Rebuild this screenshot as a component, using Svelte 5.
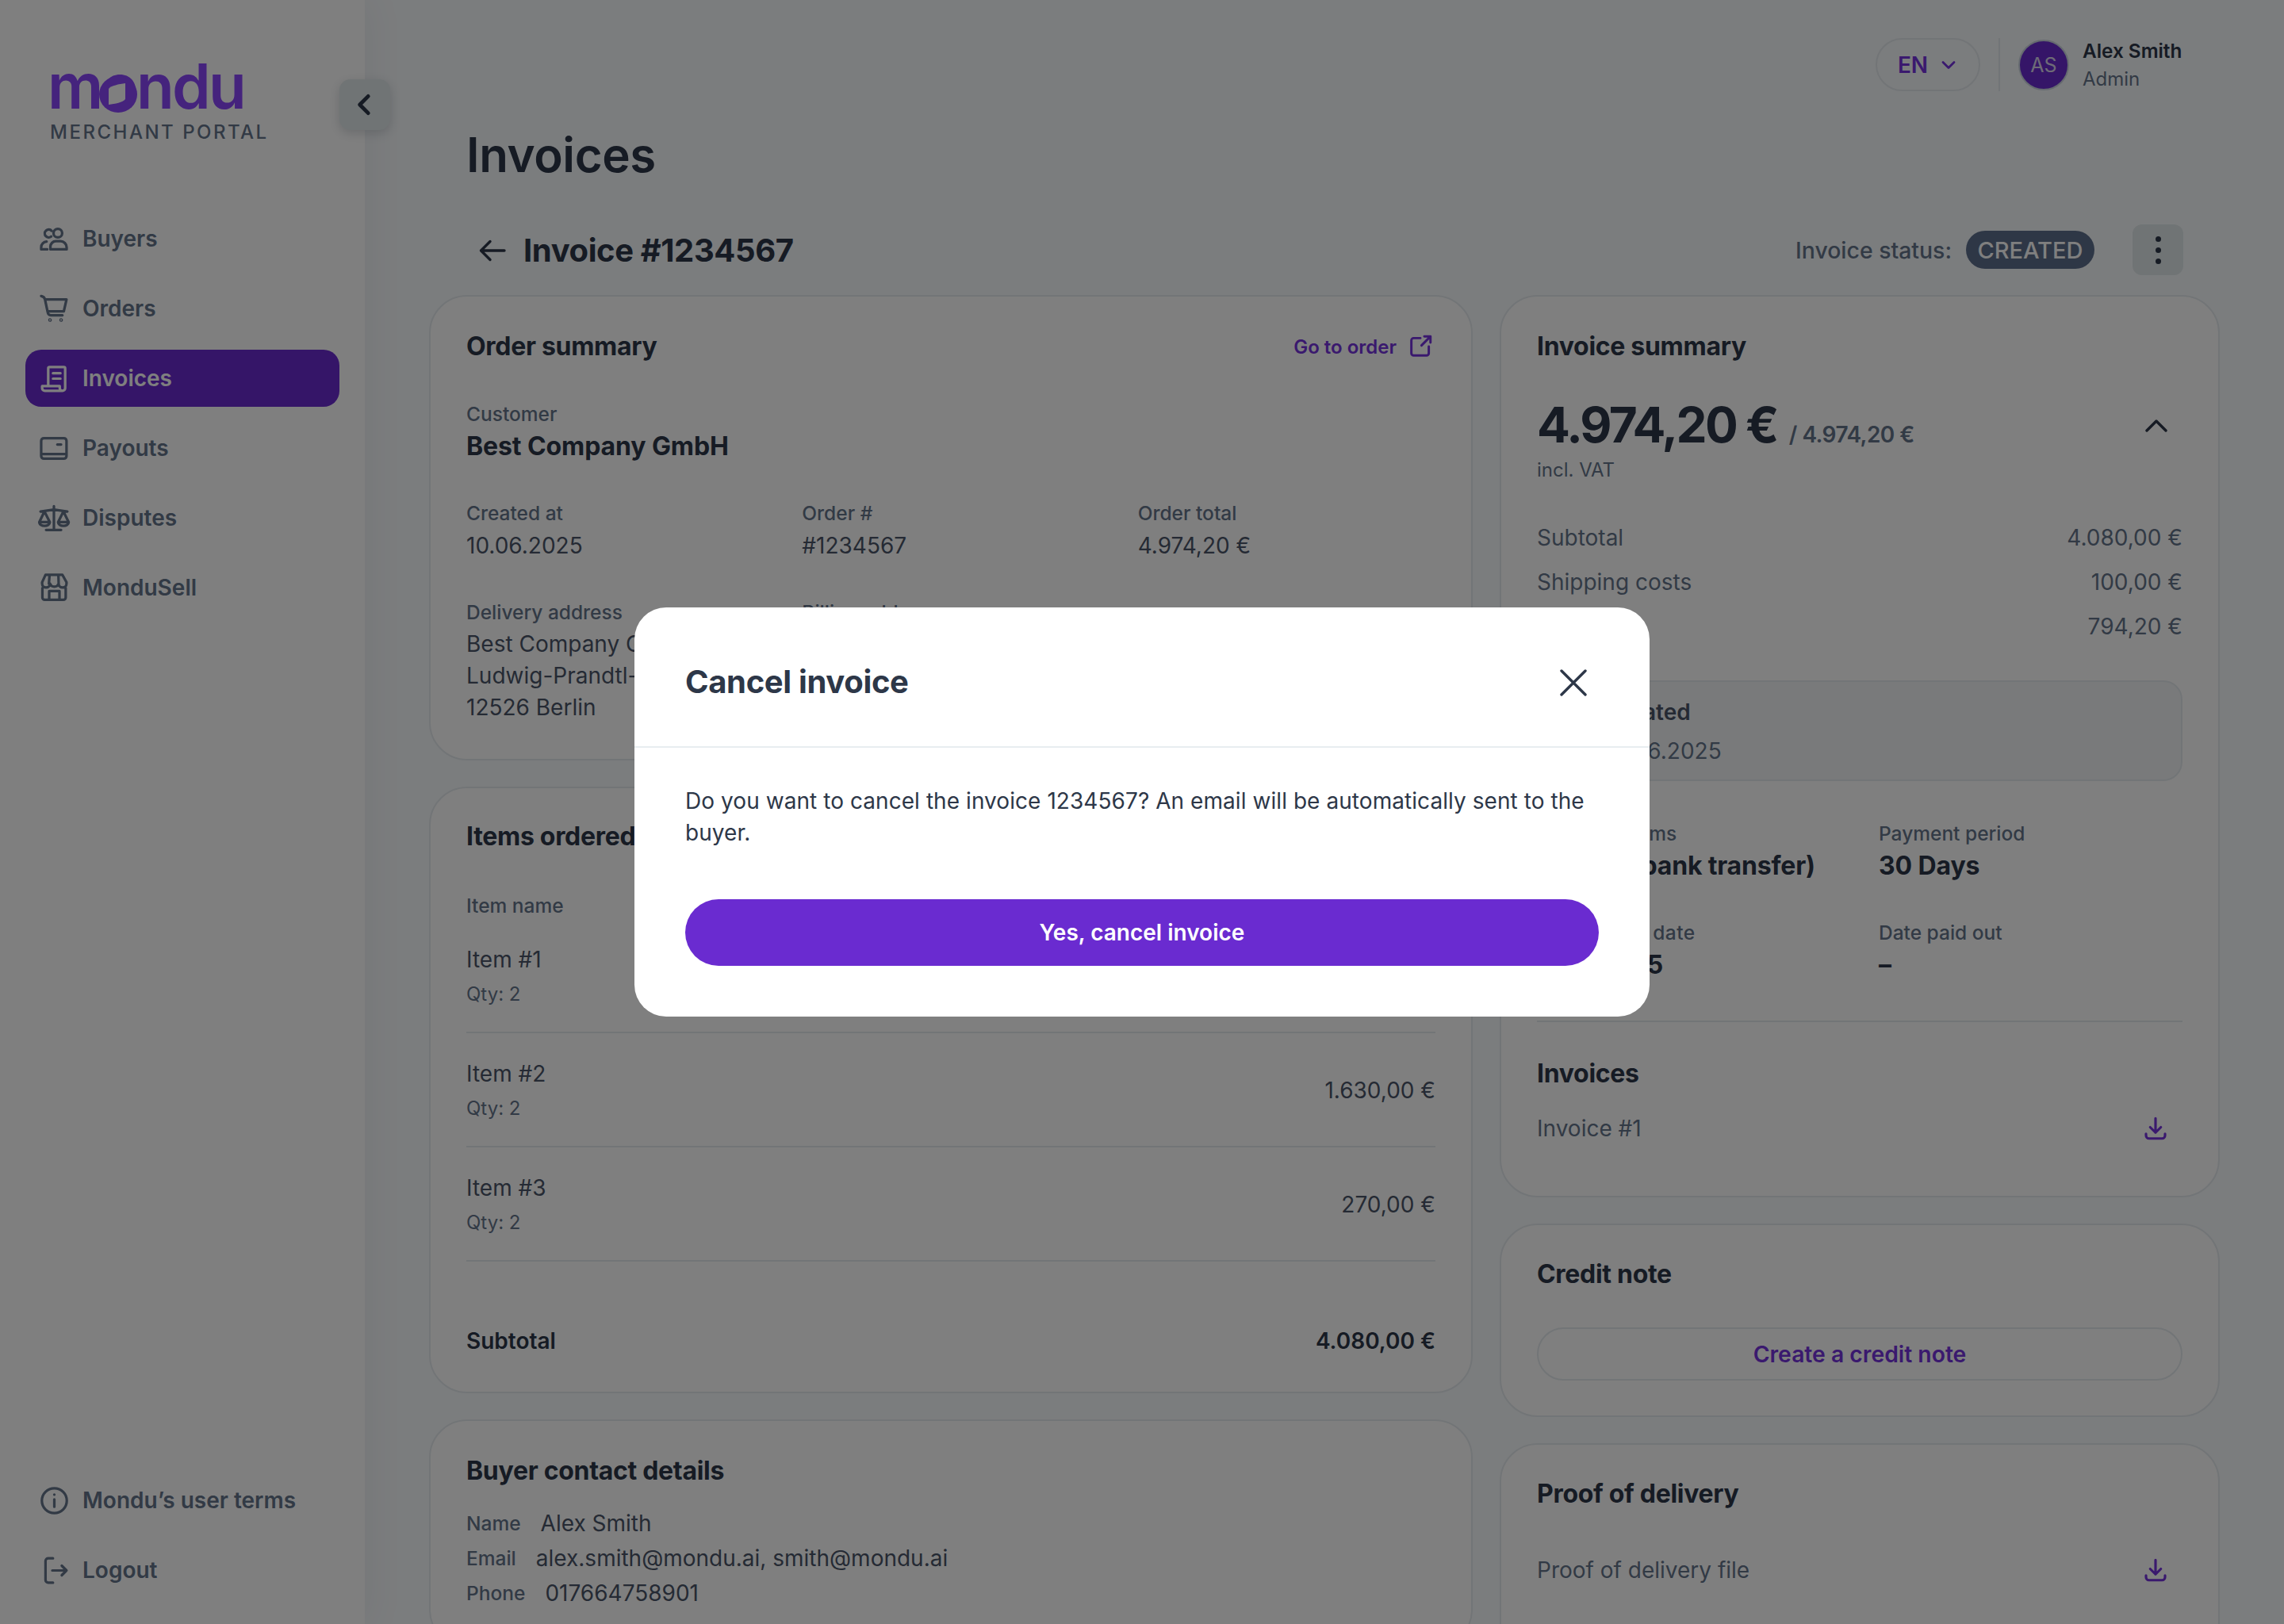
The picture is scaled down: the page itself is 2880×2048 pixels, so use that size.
<script>
  const icons = {
    buyers: "M14.6 4.400a3.200 3.200 0 1 1 0 6.400 3.200 3.200 0 0 1 0-6.400z M9.100 19.600v-2a4 4 0 0 1 4-4h3.500a4.500 4.500 0 0 1 4.500 4.500v1.500z M10 5.900a2.900 2.900 0 1 0-.3 4.200 M2.300 19.600v-1.500a4.300 4.300 0 0 1 4-4.300 M2.300 19.600h4.500",
    cart: "M2.300 2.600c1.500.3 2.500 1 2.800 2.400L7 14c.3 1.800 1 2.700 2.500 2.700H18 M5.300 5H21l-2 8.800H7 M8.800 19.800a.4.4 0 1 1 0 .8.4.4 0 0 1 0-.8z M17 19.800a.4.4 0 1 1 0 .8.4.4 0 0 1 0-.8z",
    receipt: "M7.500 17.500V4.500a1 1 0 0 1 1-1h10.500a1 1 0 0 1 1 1v14.500a2 2 0 0 1-2 2H5a2 2 0 0 1-2-2v-1.500h13v1.500a2 2 0 0 0 2 2 M11 8h5.500M11 12h5.500",
    wallet: "M4.300 4.400h14.700a2 2 0 0 1 2 2v11.200a2 2 0 0 1-2 2H4.300a2 2 0 0 1-2-2V6.400a2 2 0 0 1 2-2z M2.300 16.100H21 M14.200 9.100h2.800",
    scale: "M11.700 3.200v17.500 M5.900 20.700h11.100 M1.800 7.100 11.700 5.600 21.600 7.100 M4.700 7 .9 14.900h7.800z M.9 14.900a3.900 2.800 0 0 0 7.800 0 M18.700 7l-3.900 7.900h7.800z M14.800 14.900a3.900 2.800 0 0 0 7.800 0",
    store: "M5.500 2.300h12.500l3 5.500v1a2.900 2.900 0 0 1-5.800 0 3.400 3.400 0 0 1-6.400 0 2.900 2.900 0 0 1-5.800 0v-1z M3.200 12v7a1.700 1.700 0 0 0 1.700 1.700h13.800a1.700 1.700 0 0 0 1.700-1.700v-7 M8.200 20.700v-6.400h7.600v6.400 M8.500 2.300 8 8.800 M15 2.300 15.200 8.800",
    info: "M12 2.800a9.200 9.200 0 1 1 0 18.400 9.200 9.200 0 0 1 0-18.400z M12 11v5.500 M12 7.500h.01",
    logout: "M11 3H7.500a2 2 0 0 0-2 2v14a2 2 0 0 0 2 2H11 M10.500 12h10.500 M17.500 8.500 21 12l-3.500 3.500",
    ext: "M12 4.500H6a2 2 0 0 0-2 2V18a2 2 0 0 0 2 2h11.500a2 2 0 0 0 2-2v-6 M13 11l8-8 M15.500 3H21v5.500",
    dl: "M12 3.500v12 M7.500 11l4.500 4.500 4.500-4.500 M4 16.500V18a2.500 2.500 0 0 0 2.500 2.500h11A2.500 2.500 0 0 0 20 18v-1.500"
  };
  const nav = [
    ["buyers", "Buyers"], ["cart", "Orders"], ["receipt", "Invoices", true],
    ["wallet", "Payouts"], ["scale", "Disputes"], ["store", "MonduSell"]
  ];
  const items = [["Item #1", "1.630,00 €"], ["Item #2", "1.630,00 €"], ["Item #3", "270,00 €"]];
</script>

{#snippet icon(name, cls)}
  <svg class={cls} viewBox="0 0 24 24" fill="none" stroke="currentColor" stroke-linecap="round" stroke-linejoin="round"><path d={icons[name]} /></svg>
{/snippet}

<div class="page">
  <aside class="side">
    <div class="logo">
      <div class="word">mondu<svg class="leaf" viewBox="0 0 48 46"><ellipse cx="24" cy="23" rx="24" ry="23" fill="#8a46fb"/><path d="M33 9C25 10 15 12 12 16V36C20 35 30 33 33 29Z" fill="#fff"/></svg></div>
      <div class="portal">MERCHANT PORTAL</div>
    </div>
    <button class="collapse" aria-label="Collapse"><svg viewBox="0 0 24 24" fill="none" stroke="currentColor" stroke-width="3.400" stroke-linecap="round" stroke-linejoin="round"><path d="M15 4.500 7.500 12l7.500 7.500"/></svg></button>
    <nav class="nav">
      {#each nav as [ic, label, active]}
        <div class="nav-item" class:active>{@render icon(ic, "nav-icon")}<span>{label}</span></div>
      {/each}
    </nav>
    <div class="nav foot">
      <div class="nav-item">{@render icon("info", "nav-icon")}<span>Mondu’s user terms</span></div>
      <div class="nav-item">{@render icon("logout", "nav-icon")}<span>Logout</span></div>
    </div>
  </aside>

  <main class="main">
    <div class="top">
      <div class="lang">EN<svg viewBox="0 0 24 24" fill="none" stroke="currentColor" stroke-width="2.800" stroke-linecap="round" stroke-linejoin="round"><path d="M5 8.500l7 7 7-7"/></svg></div>
      <div class="vline"></div>
      <div class="avatar">AS</div>
      <div class="who"><div class="who-name">Alex Smith</div><div class="who-role">Admin</div></div>
    </div>

    <h1 class="title">Invoices</h1>

    <div class="head">
      <svg class="back" viewBox="0 0 34 30" fill="none" stroke="currentColor" stroke-width="3.400" stroke-linecap="round" stroke-linejoin="round"><path d="M32 15H2.500 M14 3.500 2.500 15 14 26.500"/></svg>
      <div class="head-title">Invoice #1234567</div>
      <div class="status-label">Invoice status:</div>
      <div class="pill">CREATED</div>
      <div class="kebab"><i></i><i></i><i></i></div>
    </div>

    <div class="cols">
      <div class="col">
        <section class="card order">
          <div class="row-between">
            <h2>Order summary</h2>
            <a class="goto">Go to order{@render icon("ext", "ext")}</a>
          </div>
          <div class="label customer">Customer</div>
          <div class="strong">Best Company GmbH</div>
          <div class="tri">
            <div><div class="label">Created at</div><div class="value">10.06.2025</div></div>
            <div><div class="label">Order #</div><div class="value">#1234567</div></div>
            <div><div class="label">Order total</div><div class="value">4.974,20 €</div></div>
          </div>
          <div class="tri">
            <div><div class="label">Delivery address</div><div class="addr">Best Company GmbH<br />Ludwig-Prandtl-Str. 1<br />12526 Berlin</div></div>
            <div><div class="label">Billing address</div><div class="addr">Best Company GmbH<br />Ludwig-Prandtl-Str. 1<br />12526 Berlin</div></div>
          </div>
        </section>

        <section class="card itemsc">
          <h2>Items ordered</h2>
          <div class="label itemhead">Item name</div>
          {#each items as [n, p]}
            <div class="item">
              <div><div class="value">{n}</div><div class="qty">Qty: 2</div></div>
              <div class="value">{p}</div>
            </div>
          {/each}
          <div class="subtotal"><span>Subtotal</span><span>4.080,00 €</span></div>
        </section>

        <section class="card buyer">
          <h2>Buyer contact details</h2>
          <div class="contact"><span class="label">Name</span><span class="value">Alex Smith</span></div>
          <div class="contact"><span class="label">Email</span><span class="value">alex.smith@mondu.ai, smith@mondu.ai</span></div>
          <div class="contact"><span class="label">Phone</span><span class="value">017664758901</span></div>
        </section>
      </div>

      <div class="col">
        <section class="card summary">
          <h2>Invoice summary</h2>
          <div class="amount-row">
            <div class="amount">4.974,20 €</div>
            <div class="amount-of">/ 4.974,20 €</div>
            <svg class="chev" viewBox="0 0 28 16" fill="none" stroke="currentColor" stroke-width="3.400" stroke-linecap="round" stroke-linejoin="round"><path d="M2 14 14 2l12 12"/></svg>
          </div>
          <div class="vat">incl. VAT</div>
          <div class="lines">
            <div class="line"><span>Subtotal</span><span>4.080,00 €</span></div>
            <div class="line"><span>Shipping costs</span><span>100,00 €</span></div>
            <div class="line"><span>VAT</span><span>794,20 €</span></div>
          </div>
          <div class="box"><div class="box-l">Created</div><div class="box-v">10.06.2025</div></div>
          <div class="duo terms">
            <div><div class="label">Payment terms</div><div class="strong tight">Invoice (bank transfer)</div></div>
            <div><div class="label">Payment period</div><div class="strong">30 Days</div></div>
          </div>
          <div class="duo due">
            <div><div class="label wide">Invoice due date</div><div class="strong date">10.07.2025</div></div>
            <div><div class="label">Date paid out</div><div class="strong">–</div></div>
          </div>
          <hr />
          <h2 class="sub">Invoices</h2>
          <div class="file first"><span>Invoice #1</span>{@render icon("dl", "dl")}</div>
        </section>

        <section class="card credit">
          <h2>Credit note</h2>
          <div class="outline">Create a credit note</div>
        </section>

        <section class="card proof">
          <h2>Proof of delivery</h2>
          <div class="file pf"><span>Proof of delivery file</span>{@render icon("dl", "dl")}</div>
        </section>
      </div>
    </div>
  </main>

  <div class="overlay">
    <div class="modal">
      <div class="m-head">
        <div class="m-title">Cancel invoice</div>
        <svg class="m-x" viewBox="0 0 34 34" fill="none" stroke="currentColor" stroke-width="3.400" stroke-linecap="round"><path d="M2 2l30 30M32 2 2 32"/></svg>
      </div>
      <div class="m-body">
        <p>Do you want to cancel the invoice 1234567? An email will be automatically sent to the buyer.</p>
        <button class="m-btn">Yes, cancel invoice</button>
      </div>
    </div>
  </div>
</div>

<style>
  :global(body) { margin: 0; }
  * { box-sizing: border-box; }
  .page {
    position: relative; width: 2880px; height: 2048px; overflow: hidden; display: flex;
    background: #f7fafc; font-family: Inter, "Liberation Sans", sans-serif; color: #64748b;
  }
  .side {
    position: relative; width: 460px; flex: none; background: #fff; display: flex; flex-direction: column;
    box-shadow: 0 0 48px rgba(60, 70, 90, .08); padding: 0 32px;
  }
  .logo { height: 265px; padding: 63px 0 0 28px; }
  .word {
    position: relative; width: max-content; font-size: 78px; line-height: 92px; font-weight: 600; letter-spacing: -2.800px; color: #8a46fb;
  }
  .leaf { position: absolute; left: 65px; top: 33px; width: 48px; height: 46px; }
  .portal { font-size: 24px; line-height: 30px; letter-spacing: 2.500px; color: #64748b; font-weight: 500; margin: -3px 0 0 3px; white-space: nowrap; }
  .collapse {
    position: absolute; left: 428px; top: 100px; width: 64px; height: 64px; border: 0; padding: 15px; border-radius: 14px;
    background: #e0e8ea; color: #2d3748; box-shadow: 0 4px 14px rgba(45, 55, 72, .2); display: flex;
  }
  .collapse svg { width: 34px; height: 34px; }
  .nav { display: flex; flex-direction: column; gap: 16px; }
  .foot { margin-top: auto; padding-bottom: 32px; }
  .nav-item {
    height: 72px; border-radius: 20px; display: flex; align-items: center; gap: 15px; padding-left: 16px;
    font-size: 28px; font-weight: 600; color: #64748b;
  }
  .nav-item.active { background: #6a2bd0; color: #fff; }
  .nav-item :global(.nav-icon) { width: 41px; height: 41px; stroke-width: 1.900; flex: none; }

  .main { flex: 1; min-width: 0; padding: 48px 81px 0; display: flex; flex-direction: column; }
  .top { height: 67px; display: flex; align-items: center; padding-right: 49px; justify-content: flex-end; }
  .lang {
    width: 132px; height: 67px; border: 2px solid #e5eaee; border-radius: 34px; display: flex; align-items: center; justify-content: center;
    gap: 14px; color: #7433dc; font-size: 28px; font-weight: 600;
  }
  .lang svg { width: 24px; height: 24px; }
  .vline { width: 2px; height: 67px; background: #e5eaee; margin: 0 23px; }
  .avatar {
    width: 64px; height: 64px; border-radius: 50%; background: #6a2bd0; border: 2px solid #cbd5e0; color: #dcd6ee;
    display: flex; align-items: center; justify-content: center; font-size: 25px; margin-right: 17px;
  }
  .who { width: 124px; }
  .who-name { font-size: 24.300px; line-height: 36px; font-weight: 600; color: #2d3748; white-space: nowrap; }
  .who-role { font-size: 24px; line-height: 36px; color: #64748b; }
  .title { margin: 44px 0 0; padding-left: 47px; font-size: 60px; line-height: 72px; font-weight: 600; letter-spacing: -.4px; color: #2d3748; }
  .head { margin-top: 52px; height: 65px; display: flex; align-items: center; padding: 0 46px 0 63px; color: #2d3748; }
  .back { width: 34px; height: 30px; margin-right: 22px; margin-top: 2px; }
  .head-title { font-size: 40px; font-weight: 650; flex: 1; letter-spacing: -.4px; }
  .status-label { font-size: 28.400px; font-weight: 500; color: #64748b; margin-right: 2px; }
  .pill { margin-left: 16px; height: 48px; width: 162px; border-radius: 24px; background: #5d6f8c; color: #fff; font-size: 29px; font-weight: 500; display: flex; align-items: center; justify-content: center; }
  .kebab { margin-left: 48px; width: 64px; height: 64px; border-radius: 12px; background: #e0e8ea; display: flex; flex-direction: column; align-items: center; justify-content: center; gap: 7px; }
  .kebab i { width: 7px; height: 7px; border-radius: 50%; background: #2d3748; }

  .cols { margin-top: 25px; display: grid; grid-template-columns: 1316px 908px; gap: 34px; }
  .col { display: flex; flex-direction: column; gap: 33px; }
  .card { background: #fff; border: 2px solid #e5eaee; border-radius: 48px; padding: 43px 45px 45px; }
  h2 { margin: 0; font-size: 32px; line-height: 40px; font-weight: 650; letter-spacing: -.3px; color: #2d3748; }
  .row-between { display: flex; justify-content: space-between; align-items: center; }
  .goto { display: flex; align-items: center; gap: 13px; color: #7433dc; font-size: 24px; font-weight: 600; margin-right: 2px; }
  .goto :global(.ext) { width: 34px; height: 34px; stroke-width: 2.100; }
  .label { font-size: 24.500px; line-height: 34px; margin-top: 2px; font-weight: 500; color: #64748b; }
  .label.wide { letter-spacing: .4px; }
  .value { font-size: 28px; line-height: 48px; color: #4a5568; }
  .strong { font-size: 32px; line-height: 48px; font-weight: 650; letter-spacing: -.1px; color: #2d3748; white-space: nowrap; }
  .strong.tight { letter-spacing: -.2px; }
  .strong.date { letter-spacing: -1.500px; }
  .customer { margin-top: 48px; }
  .tri { display: grid; grid-template-columns: repeat(3, 1fr); gap: 48px; margin-top: 41px; }
  .addr { margin-top: 3px; font-size: 28px; line-height: 40px; color: #4a5568; }

  .itemsc { padding-top: 41px; padding-bottom: 44px; }
  .itemhead { margin-top: 50px; }
  .item { height: 144px; border-bottom: 2px solid #e5eaee; display: flex; justify-content: space-between; align-items: center; padding-top: 2px; }
  .item .value { line-height: 40px; }
  .qty { font-size: 24px; line-height: 36px; margin-top: 6px; color: #64748b; }
  .subtotal { display: flex; justify-content: space-between; margin-top: 80px; font-size: 28px; line-height: 40px; font-weight: 600; color: #2d3748; }

  .buyer { padding-top: 43px; }
  .contact { display: flex; align-items: center; gap: 25px; height: 44px; }
  .contact .label { margin-top: 0; }
  .buyer h2 { margin-bottom: 24px; }

  .amount-row { display: flex; align-items: baseline; gap: 15px; margin-top: 41px; position: relative; height: 76px; }
  .amount { font-size: 62px; line-height: 76px; font-weight: 700; letter-spacing: -2.700px; color: #2d3748; white-space: nowrap; }
  .amount-of { font-size: 28px; font-weight: 600; letter-spacing: -.55px; color: #64748b; white-space: nowrap; }
  .chev { position: absolute; right: 19px; top: 31px; width: 28px; height: 16px; color: #2d3748; }
  .vat { font-size: 24px; line-height: 36px; color: #64748b; margin-top: 1px; }
  .lines { margin-top: 39px; }
  .line { height: 56px; display: flex; justify-content: space-between; align-items: center; font-size: 28px; color: #64748b; }
  .box { margin-top: 40px; height: 127px; border: 2px solid #e5eaee; border-radius: 24px; background: #f2f5f7; padding: 18px 0 0 84px; }
  .box-l { font-size: 28px; line-height: 40px; font-weight: 600; color: #4a5568; }
  .box-v { font-size: 28px; line-height: 48px; margin-top: 5px; color: #64748b; }
  .duo { display: grid; grid-template-columns: 383px 383px; gap: 48px; }
  .terms { margin-top: 47px; }
  .due { margin-top: 41px; }
  hr { border: 0; height: 2px; background: #e5eaee; margin: 46px 0 0; }
  .sub { margin-top: 45px; }
  .file { display: flex; align-items: center; justify-content: space-between; height: 40px; font-size: 28px; color: #64748b; }
  .file.first { margin-top: 29px; margin-bottom: 20px; }
  .file.pf { margin-top: 56px; }
  .file :global(.dl) { width: 36px; height: 36px; stroke-width: 2.100; color: #7433dc; margin-right: 16px; }
  .credit { padding-top: 42px; padding-bottom: 44px; }
  .outline { margin-top: 47px; height: 67px; border: 2px solid #e5eaee; border-radius: 34px; color: #7433dc; font-size: 28.300px; font-weight: 600; display: flex; align-items: center; justify-content: center; }
  .proof { padding-top: 42px; padding-bottom: 140px; }

  .overlay { position: absolute; inset: 0; background: rgba(0, 0, 0, .5); display: flex; align-items: center; justify-content: center; }
  .modal { width: 1280px; height: 516px; background: #fff; border-radius: 40px; display: flex; flex-direction: column; }
  .m-head { height: 177px; border-bottom: 2px solid #e8edf0; padding: 12px 64px 0; display: flex; align-items: center; justify-content: space-between; }
  .m-title { font-size: 40px; font-weight: 650; letter-spacing: -.35px; color: #2d3748; }
  .m-x { width: 34px; height: 34px; color: #2d3748; margin: 2px 15px 0 0; }
  .m-body { padding: 47px 64px 0; }
  .m-body p { margin: 0; font-size: 28px; letter-spacing: .06px; line-height: 40px; color: #2d3748; }
  .m-btn { display: block; width: 100%; margin-top: 64px; height: 84px; border: 0; border-radius: 42px; background: #6a2bd0; color: #fff; font: 600 28px Inter, sans-serif; }
</style>
